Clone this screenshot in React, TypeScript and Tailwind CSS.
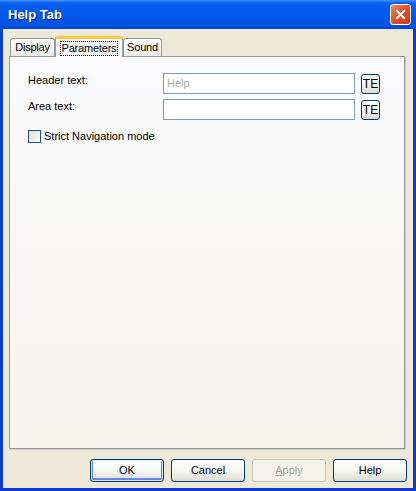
import { X } from 'lucide-react';

const font = "font-['Tahoma','Liberation_Sans',sans-serif]";

const XpButton = ({ label, isDefault, disabled }: { label: React.ReactNode; isDefault?: boolean; disabled?: boolean }) => (
    <button
        className={
            'w-[74px] h-[23px] rounded-[3px] border text-[11px] flex items-center justify-center ' +
            (disabled
                ? 'border-[#C9C7BA] bg-[#F5F4EA] text-[#ACA899]'
                : 'border-[#003C74] bg-[linear-gradient(to_bottom,#FFFFFF_0%,#F3F3EE_60%,#DCDBD3_100%)] text-black') +
            (isDefault ? ' shadow-[inset_0_0_0_1px_#CEE7FF,inset_0_-1px_0_2px_#6982EE]' : '')
        }
    >
        {label}
    </button>
);

const TeButton = () => (
    <button className="w-[19px] h-[20px] rounded-[3px] border border-[#003C74] bg-[linear-gradient(to_bottom,#FFFFFF_0%,#F3F3EE_60%,#DCDBD3_100%)] text-[12px] leading-none text-black flex items-center justify-center">
        TE
    </button>
);

const App = () => {
    return (
        <div className={`w-[416px] h-[491px] bg-[#0A3CD2] flex flex-col ${font}`}>
            {/* Title bar */}
            <div className="h-[29px] shrink-0 flex items-center justify-between pl-[8px] pr-[5px] bg-[linear-gradient(to_bottom,#3D95FF_0%,#0A5FF0_10%,#0058EE_45%,#0054E3_85%,#0048D6_100%)]">
                <span className="text-white font-bold text-[13px] font-['Liberation_Sans',sans-serif] [text-shadow:1px_1px_0_#0A1883]">
                    Help Tab
                </span>
                <div className="w-[21px] h-[21px] rounded-[3px] border border-white bg-[linear-gradient(135deg,#EE8A6C_0%,#E2542D_45%,#C63B16_100%)] flex items-center justify-center">
                    <X size={15} strokeWidth={3.2} className="text-white" />
                </div>
            </div>

            {/* Client area */}
            <div className="flex-1 mx-[3px] mb-[3px] bg-[#ECE9D8] flex flex-col pt-[7px] pl-[6px] pr-[8px] pb-[6px] text-[11px] text-black">
                {/* Tabs */}
                <div className="h-[20px] flex items-end pl-[1px] relative z-10 tracking-[-0.2px]">
                    <div className="h-[18px] w-[45px] flex items-center justify-center rounded-t-[3px] border border-b-0 border-[#919B9C] bg-[linear-gradient(to_bottom,#FFFFFF_0%,#F3F3EF_60%,#ECEBE5_100%)]">
                        Display
                    </div>
                    <div className="h-[21px] -mb-px w-[68px] flex items-center justify-center rounded-t-[3px] border-x border-[#919B9C] border-t-[3px] border-t-[#FFC83C] bg-[#FCFCFE]">
                        <span className="border border-dotted border-black px-[1px] leading-[13px]">Parameters</span>
                    </div>
                    <div className="h-[18px] w-[39px] flex items-center justify-center rounded-t-[3px] border border-b-0 border-[#919B9C] bg-[linear-gradient(to_bottom,#FFFFFF_0%,#F3F3EF_60%,#ECEBE5_100%)]">
                        Sound
                    </div>
                </div>

                {/* Panel */}
                <div className="flex-1 border border-[#919B9C] shadow-[1px_1px_0_#D0CEBF] bg-[linear-gradient(to_bottom,#FCFCFE_0%,#F4F3EE_100%)] pt-[16px] pl-[18px]">
                    <div className="grid grid-cols-[129px_192px_19px] gap-x-[6px] gap-y-[5px] items-center">
                        <span className="-mt-[6px]">Header text:</span>
                        <div className="h-[21px] border border-[#7F9DB9] bg-white flex items-center pl-[3px] text-[#ACA899]">Help</div>
                        <TeButton />
                        <span className="-mt-[6px]">Area text:</span>
                        <div className="h-[21px] border border-[#7F9DB9] bg-white" />
                        <TeButton />
                    </div>
                    <label className="flex items-center gap-[3px] mt-[8px]">
                        <span className="w-[13px] h-[13px] border border-[#1C5180] bg-[linear-gradient(135deg,#DCDCD7_0%,#F0F0EA_60%,#FFFFFF_100%)]" />
                        Strict Navigation mode
                    </label>
                </div>

                {/* Buttons */}
                <div className="mt-[10px] flex justify-end gap-[7px] -mr-[2px]">
                    <XpButton label="OK" isDefault />
                    <XpButton label="Cancel" />
                    <XpButton label={<><u>A</u>pply</>} disabled />
                    <XpButton label="Help" />
                </div>
            </div>
        </div>
    );
};

export default App;
